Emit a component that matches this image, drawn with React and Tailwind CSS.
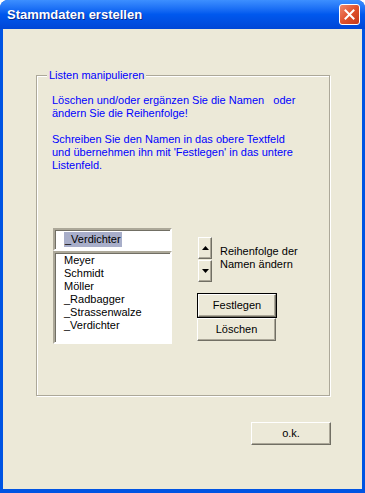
import React from "react";

const font = "font-['Tahoma','Liberation_Sans','DejaVu_Sans',sans-serif]";

const XpButton = ({ children, isDefault, className = "" }) => (
  <div className={`${isDefault ? "border border-black" : ""} ${className}`}>
    <div className="flex h-full w-full items-center justify-center border border-t-white border-l-white border-b-[#716f64] border-r-[#716f64] bg-[#ece9d8] text-[11px] text-black shadow-[inset_-1px_-1px_0_#aca899]">
      {children}
    </div>
  </div>
);

const SpinButton = ({ up }) => (
  <div className="flex h-[22px] w-[14px] items-center justify-center border border-t-white border-l-white border-b-[#716f64] border-r-[#716f64] bg-[#ece9d8] shadow-[inset_-1px_-1px_0_#aca899]">
    <svg width="7" height="4" viewBox="0 0 7 4">
      {up ? <path d="M3.5 0 L7 4 L0 4 Z" fill="#000" /> : <path d="M0 0 L7 0 L3.5 4 Z" fill="#000" />}
    </svg>
  </div>
);

export default function App() {
  const names = ["Meyer", "Schmidt", "Möller", "_Radbagger", "_Strassenwalze", "_Verdichter"];

  return (
    <div className={`h-[493px] w-[365px] bg-white ${font}`}>
      <div className="flex h-full flex-col overflow-hidden rounded-t-[8px] bg-[#0054e3]">
        {/* title bar */}
        <div className="flex h-[29px] shrink-0 items-center justify-between bg-gradient-to-b from-[#3d8fff] via-[#0058ee] to-[#0046d6] pl-[7px] pr-[5px]">
          <span className="text-[13px] font-bold leading-none text-white [text-shadow:1px_1px_0_#0a2a8c]">
            Stammdaten erstellen
          </span>
          <div className="flex h-[21px] w-[21px] items-center justify-center rounded-[3px] border border-white bg-gradient-to-br from-[#f0876a] via-[#e0512c] to-[#c4381a]">
            <svg width="11" height="11" viewBox="0 0 11 11">
              <path d="M1.5 1.5 L9.5 9.5 M9.5 1.5 L1.5 9.5" stroke="#fff" strokeWidth="2" strokeLinecap="square" />
            </svg>
          </div>
        </div>

        {/* client area */}
        <div className="mx-[3px] mb-[4px] flex flex-1 flex-col bg-[#ece9d8]">
          <div className="relative ml-[33px] mt-[46px] h-[321px] w-[294px] border border-[#aca899] shadow-[1px_1px_0_white,inset_1px_1px_0_white]">
            <span className="absolute left-[10px] top-[-7px] bg-[#ece9d8] px-[2px] text-[11px] leading-[13px] text-[#0000ff]">
              Listen manipulieren
            </span>

            <div className="pl-[15px] pt-[18px] text-[11px] leading-[13px] text-[#0000ff]">
              <p>Löschen und/oder ergänzen Sie die Namen&nbsp;&nbsp;&nbsp;oder</p>
              <p>ändern Sie die Reihenfolge!</p>
              <p className="mt-[13px]">Schreiben Sie den Namen in das obere Textfeld</p>
              <p>und übernehmen ihn mit 'Festlegen' in das untere</p>
              <p>Listenfeld.</p>
            </div>

            <div className="mt-[56px] flex pl-[16px]">
              <div className="flex w-[119px] flex-col">
                <div className="flex h-[23px] items-center border-2 border-t-[#aca899] border-l-[#aca899] border-b-white border-r-white bg-white pl-[9px] shadow-[inset_1px_1px_0_#716f64]">
                  <span className="bg-[#a8aec9] px-px text-[11px] leading-[15px] text-black">_Verdichter</span>
                </div>
                <div className="h-[93px] border-2 border-t-[#aca899] border-l-[#aca899] border-b-white border-r-white bg-white pl-[9px] pt-[1px] text-[11px] leading-[13px] text-black shadow-[inset_1px_1px_0_#716f64]">
                  {names.map((n) => (
                    <div key={n}>{n}</div>
                  ))}
                </div>
              </div>

              <div className="ml-[25px] flex flex-col">
                <div className="mt-[9px] flex">
                  <div className="ml-px flex flex-col gap-px">
                    <SpinButton up />
                    <SpinButton />
                  </div>
                  <div className="ml-[8px] mt-[8px] text-[11px] leading-[13px] text-black">
                    <div>Reihenfolge der</div>
                    <div>Namen ändern</div>
                  </div>
                </div>
                <XpButton isDefault className="mt-[11px] h-[25px] w-[80px]">
                  Festlegen
                </XpButton>
                <XpButton className="h-[23px] w-[79px]">Löschen</XpButton>
              </div>
            </div>
          </div>

          <div className="mt-[26px] flex justify-end pr-[31px]">
            <XpButton className="h-[23px] w-[80px]">o.k.</XpButton>
          </div>
        </div>
      </div>
    </div>
  );
}
